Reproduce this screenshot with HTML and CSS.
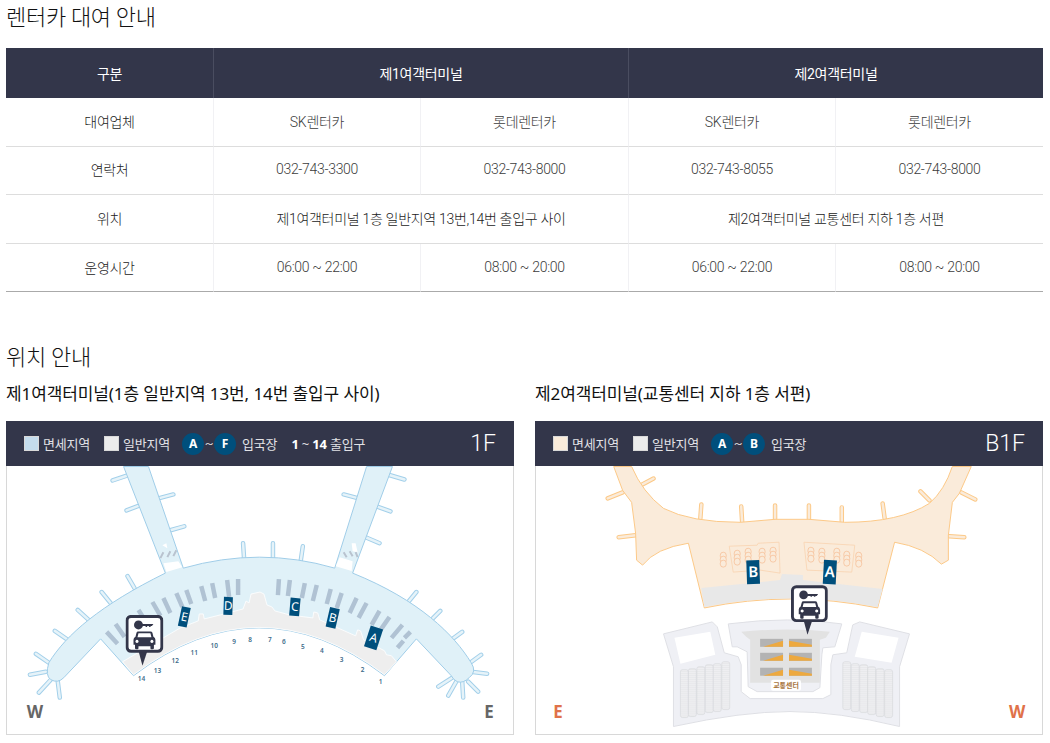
FILE: index.html
```html
<!DOCTYPE html>
<html lang="ko">
<head>
<meta charset="utf-8">
<title>렌터카 대여 안내</title>
<link rel="stylesheet" href="styles.css">
</head>
<body>
<svg class="defs" width="0" height="0" aria-hidden="true">
  <defs>
    <symbol id="pin" viewBox="0 0 38 51">
      <path class="pin-tip" d="M13 36 L17 51 L22 36 Z"/>
      <rect class="pin-box" x="1.5" y="1.5" width="35" height="35" rx="4"/>
      <g class="pin-ink">
        <circle cx="13" cy="10" r="4.5"/>
        <path d="M13 9 H28 L26.5 11 H25.5 L24.8 12 H24 L23.2 11 H22 L21.3 12 H20.5 L19.8 11 H13 Z"/>
        <path fill-rule="evenodd" d="M12.5 16.500 H25 Q26.500 16.500 27 18 L28 22 Q30 23 30 25 V30 H28.500 V33.500 Q28.500 34.500 27 34.500 H26 Q25 34.500 25 33.500 V31.500 H13 V33.500 Q13 34.500 12 34.500 H11 Q9.500 34.500 9.500 33.500 V30 H8 V25 Q8 23 10 22 L11 18 Q11.500 16.500 12.500 16.500 Z M13 18.500 L12 22.500 H26 L25 18.500 Z M11.500 25 a1.600 1.600 0 1 0 .01 0 Z M26.500 25 a1.600 1.600 0 1 0 .01 0 Z"/>
      </g>
    </symbol>
    <pattern id="stalls" width="4" height="2" patternUnits="userSpaceOnUse">
      <rect width="4" height="2" fill="#e4e5e8"/>
      <rect width="4" height="1" fill="#f2f2f4"/>
    </pattern>
    <g id="t1legs">
      <path d="M112 480L130 474M158 498L173 494M126 510L142 504M170 530L184 526M243 543L244 558M127 576L134 588M101 592L110 603M77 610L88 620M54 631L67 640M35 654L48 663M29 675L45 672M38 693L50 680M59 698L57 682M388 474L405 479M344 494L359 498M377 506L391 511M366 537L380 543M273 543L273 558M303 546L301 560M417 592L408 603M441 611L431 621M463 632L452 640M482 655L471 663M488 674L472 672M479 692L469 682M464 698L463 682M449 696L457 682M439 687L453 678"/>
    </g>
    <g id="t2legs">
      <path d="M607 498L622 492M638 486L653 478M618 537L635 535M700 518L701 504M742 522L741 506M775 519L775 505M809 519L809 505M842 522L842 507M885 518L883 503M930 500L921 491M962 492L976 499M950 536L965 537"/>
    </g>
    <g id="pod">
      <rect x="-3" y="0" width="6" height="7" rx="3"/>
      <rect x="-3" y="4" width="6" height="7" rx="3"/>
      <rect x="-3" y="8" width="6" height="7" rx="3"/>
    </g>
  </defs>
</svg>

<main class="page">
  <h2 class="title">렌터카 대여 안내</h2>
  <table class="rent">
    <colgroup><col class="c-narrow"><col class="c-narrow"><col class="c-wide"><col class="c-narrow"><col class="c-wide"></colgroup>
    <thead>
      <tr>
        <th>구분</th>
        <th colspan="2">제1여객터미널</th>
        <th colspan="2">제2여객터미널</th>
      </tr>
    </thead>
    <tbody>
      <tr><td class="head">대여업체</td><td>SK렌터카</td><td>롯데렌터카</td><td>SK렌터카</td><td>롯데렌터카</td></tr>
      <tr><td class="head">연락처</td><td>032-743-3300</td><td>032-743-8000</td><td>032-743-8055</td><td>032-743-8000</td></tr>
      <tr><td class="head">위치</td><td colspan="2" class="dark">제1여객터미널 1층 일반지역 13번,14번 출입구 사이</td><td colspan="2" class="dark">제2여객터미널 교통센터 지하 1층 서편</td></tr>
      <tr><td class="head">운영시간</td><td>06:00 ~ 22:00</td><td>08:00 ~ 20:00</td><td>06:00 ~ 22:00</td><td>08:00 ~ 20:00</td></tr>
    </tbody>
  </table>

  <h2 class="title title-location">위치 안내</h2>
  <div class="maps">
    <section class="map-col">
      <h3 class="sub">제1여객터미널(1층 일반지역 13번, 14번 출입구 사이)</h3>
      <div class="legend">
        <span class="swatch swatch-blue"></span><span class="lg-text">면세지역</span>
        <span class="swatch swatch-gray lg-next"></span><span class="lg-text">일반지역</span>
        <span class="gate gate-first">A</span><span class="tilde">~</span><span class="gate">F</span><span class="lg-text lg-after">입국장</span>
        <span class="lg-text lg-range"><b>1</b> ~ <b>14</b> 출입구</span>
        <span class="floor">1F</span>
      </div>
      <div class="map">
        <svg class="map-svg" viewBox="6 466 508 268" width="506" height="268">
          <use href="#t1legs" class="leg-o"/>
          <use href="#t1legs" class="leg-i"/>
          <path class="t1" d="M48 663 C65 635 100 605 165 573 L123 466 L148 466 L183 568 Q260 546 335 568 L367 466 L393 466 L353 573 C420 600 455 635 472 663 Q478 672 470 678 Q464 684 458 682 Q454 680 452 676 L417 639 L385 676 Q259 580 133 676 L100 639 L63 678 Q57 684 50 680 Q44 676 48 663 Z"/>
          <path class="t1-land" d="M122 662 L180 628 L198 621 L199 614 L203 614 L204 619 L224 614 L243 609 L246 601 L249 603 L251 594 L260 592 L264 594 L267 605 L272 607 L275 611 L290 615 L313 618 L314 612 L318 613 L320 620 L356 636 L358 630 L361 631 L364 640 L385 651 L387 655 L392 656 L397 662 L385 675 Q259 580 133 675 Z"/>
          <path class="bridge" d="M163 563 L178 561 L182 567 L166 572 Z M336 566 L340 557 L353 561 L352 571 Z M162 545 L166 543 L167 548 Z M352 543 L356 543 L358 552 L353 551 Z"/>
          <path class="hatch" d="M160 558L163 552M167 557L170 551M173 556L176 550M344 552L347 557M350 551L353 556M356 552L358 557"/>
          <path class="bar" d="M106 632L117 644M115 624L124 637M138 610L143 618M152 602L160 616M163 598L170 613M176 593L182 607M186 590L191 604M201 586L205 601M212 583L215 598M227 580L229 597M238 579L238 595M279 579L278 595M290 580L288 596M305 583L302 598M317 585L313 601M331 589L327 604M342 593L337 608M357 598L350 613M367 603L359 618M380 611L372 625M390 617L381 630M403 625L392 638M411 632L405 638M404 641L398 648"/>
          <g class="gates">
            <g transform="translate(184 617) rotate(12)"><rect x="-4.500" y="-10" width="9" height="20"/><text y="4">E</text></g>
            <g transform="translate(228 606) rotate(2)"><rect x="-4.500" y="-9" width="9" height="18"/><text y="4">D</text></g>
            <g transform="translate(295 607) rotate(5)"><rect x="-5" y="-9" width="10" height="18"/><text y="4">C</text></g>
            <g transform="translate(333 618) rotate(13)"><rect x="-5" y="-10" width="10" height="20"/><text y="4">B</text></g>
            <g transform="translate(374 638) rotate(18)"><rect x="-6.500" y="-11" width="13" height="22"/><text y="4">A</text></g>
          </g>
          <g class="nums">
            <text x="141" y="681">14</text><text x="157" y="673">13</text><text x="175" y="663">12</text><text x="194" y="655">11</text><text x="214" y="648">10</text><text x="234" y="644">9</text><text x="250" y="642">8</text><text x="270" y="642">7</text><text x="284" y="644">6</text><text x="303" y="649">5</text><text x="322" y="653">4</text><text x="342" y="662">3</text><text x="363" y="672">2</text><text x="381" y="684">1</text>
          </g>
          <text class="dir dir-gray" x="34" y="718">W</text>
          <text class="dir dir-gray" x="490" y="718">E</text>
          <use href="#pin" x="125" y="615" width="38" height="51"/>
        </svg>
      </div>
    </section>

    <section class="map-col">
      <h3 class="sub">제2여객터미널(교통센터 지하 1층 서편)</h3>
      <div class="legend">
        <span class="swatch swatch-cream"></span><span class="lg-text">면세지역</span>
        <span class="swatch swatch-gray lg-next"></span><span class="lg-text">일반지역</span>
        <span class="gate gate-first">A</span><span class="tilde">~</span><span class="gate">B</span><span class="lg-text lg-after">입국장</span>
        <span class="floor">B1F</span>
      </div>
      <div class="map">
        <svg class="map-svg" viewBox="535 466 508 268" width="506" height="268">
          <use href="#t2legs" class="leg-o2"/>
          <use href="#t2legs" class="leg-i2"/>
          <path class="t2" d="M613 466 L622 490 L631 502 L635 533 L636 560 L642 565 Q655 548 688 543 L704 608 Q790 590 878 608 L895 542 Q925 547 942 564 L949 560 L949 535 L953 502 L960 493 L972 466 L953 466 Q945 490 930 503 Q900 522 845 522 L809 519 L775 519 L740 522 Q690 522 663 508 Q642 492 631 466 Z"/>
          <path class="t2-land" d="M701 588 L780 580 L782 574 L803 575 L803 580 L883 589 L878 607 Q790 590 704 607 Z"/>
          <path class="shop" d="M729 546 L757 545 L758 543 L779 542 L780 573 L760 570 L733 572 Z M804 542 L855 545 L852 572 L807 570 Z"/>
          <g class="pods">
            <use href="#pod" x="723" y="552"/><use href="#pod" x="737" y="550"/><use href="#pod" x="748" y="548"/><use href="#pod" x="762" y="548"/><use href="#pod" x="773" y="547"/>
            <use href="#pod" x="811" y="547"/><use href="#pod" x="822" y="548"/><use href="#pod" x="837" y="548"/><use href="#pod" x="847" y="551"/><use href="#pod" x="859" y="552"/>
          </g>
          <g class="gates gates-large">
            <g transform="translate(753 572) rotate(-2)"><rect x="-6.500" y="-12" width="13" height="24"/><text y="5">B</text></g>
            <g transform="translate(830 572) rotate(3)"><rect x="-6.500" y="-12" width="13" height="24"/><text y="5">A</text></g>
          </g>
          <path class="tc" d="M663 634 L712 622 L717 627 L724 653 L738 657 L741 665 L741 692 L750 699 L823 699 L831 695 L831 665 L833 655 L847 653 L853 625 L860 622 L910 634 L900 667 L900 727 Q838 712 790 712 Q742 712 673 727 L673 667 Z"/>
          <path class="tc" d="M728 624 Q790 616 842 624 L835 647 L823 648 L822 655 L820 688 L813 692 L757 692 L748 687 L747 652 L737 647 L732 647 Z"/>
          <path class="tc-floor" d="M741 632 Q790 627 830 632 L826 638 L820 640 L820 683 L750 683 L750 640 L746 637 Z"/>
          <path class="tc-white" d="M674 638 L710 632 L715 655 L680 664 Z M862 632 L899 638 L892 663 L855 657 Z"/>
          <g class="stalls">
            <rect x="680" y="670" width="8" height="48" rx="2"/><rect x="688" y="669" width="8" height="48" rx="2"/><rect x="696.500" y="667" width="8" height="48" rx="2"/><rect x="705" y="665" width="8" height="48" rx="2"/><rect x="713" y="664" width="8" height="48" rx="2"/><rect x="721.500" y="662" width="8" height="48" rx="2"/>
            <rect x="843" y="662" width="8" height="48" rx="2"/><rect x="851.500" y="664" width="8" height="48" rx="2"/><rect x="860" y="665" width="8" height="48" rx="2"/><rect x="868" y="667" width="8" height="48" rx="2"/><rect x="876.500" y="669" width="8" height="48" rx="2"/><rect x="885" y="670" width="8" height="48" rx="2"/>
          </g>
          <g class="lots">
            <rect x="760" y="639" width="23" height="8"/><rect x="760" y="653" width="23" height="8"/><rect x="760" y="668" width="23" height="8"/>
            <rect x="789" y="639" width="23" height="8"/><rect x="789" y="653" width="23" height="8"/><rect x="789" y="668" width="23" height="8"/>
          </g>
          <g class="wedges">
            <path d="M763 647 L783 641 V647 Z M763 661 L783 655 V661 Z M763 676 L783 670 V676 Z M789 641 L812 645 V647 H789 Z M789 655 L812 659 V661 H789 Z M789 670 L812 674 V676 H789 Z"/>
          </g>
          <rect class="tc-tag" x="771" y="680" width="30" height="11" rx="2"/>
          <text class="tc-label" x="786" y="688">교통센터</text>
          <text class="dir dir-orange" x="557" y="718">E</text>
          <text class="dir dir-orange" x="1018" y="718">W</text>
          <use href="#pin" x="791" y="585" width="37" height="50"/>
        </svg>
      </div>
    </section>
  </div>
</main>
</body>
</html>
```

FILE: styles.css
```css
* { box-sizing: border-box; }

html, body { margin: 0; padding: 0; background: #fff; }

body {
  font-family: Roboto, "Noto Sans CJK KR", sans-serif;
  color: #333;
  overflow: hidden;
}

.defs { position: absolute; }

.page {
  width: 1037px;
  margin-left: 6px;
}

.title {
  margin: 0;
  height: 48px;
  font-size: 22px;
  font-weight: 300;
  line-height: 36px;
  letter-spacing: -0.3px;
  color: #111;
}

.title-location {
  height: 34px;
  margin-top: 48px;
}

.rent {
  width: 1037px;
  table-layout: fixed;
  border-collapse: separate;
  border-spacing: 0;
  font-size: 14px;
  letter-spacing: -0.3px;
  font-weight: 300;
  text-align: center;
}

.c-narrow { width: 207px; }
.c-wide { width: 208px; }

.rent th {
  height: 50px;
  padding: 0;
  background: #33364a;
  color: #fff;
  font-weight: 400;
  border-left: 1px solid #4a4d60;
}

.rent th:first-child { border-left: 0; }

.rent td {
  height: 48.5px;
  padding: 0 0 2px;
  color: #3c3c3c;
  border-bottom: 1px solid #ddd;
  border-left: 1px solid #f1f1f4;
}

.rent tbody tr:last-child td {
  padding-bottom: 0;
  border-bottom-color: #aaa;
}

.rent td.head {
  border-left: 0;
  color: #222;
}

.rent td.dark { color: #222; }

.maps {
  display: grid;
  grid-template-columns: 508px 508px;
  column-gap: 21px;
}

.sub {
  margin: 0;
  height: 47px;
  padding-top: 9px;
  font-family: "Noto Sans", "Noto Sans CJK KR", sans-serif;
  font-size: 17px;
  font-weight: 400;
  line-height: 22px;
  color: #111;
  letter-spacing: -0.1px;
  white-space: nowrap;
}

.legend {
  display: flex;
  align-items: center;
  height: 45px;
  padding: 0 18px;
  background: #33364a;
  color: #e2e2e6;
  font-size: 13px;
}

.swatch {
  width: 15px;
  height: 15px;
  border: 1px solid #d9d9d9;
}

.swatch-blue { background: #c4dced; }
.swatch-gray { background: #ececec; }
.swatch-cream { background: #faebda; }

.lg-text {
  margin-left: 4px;
  font-family: "Noto Sans", "Noto Sans CJK KR", sans-serif;
  letter-spacing: -0.2px;
  white-space: nowrap;
}

.lg-next { margin-left: 14px; }

.gate {
  display: flex;
  align-items: center;
  justify-content: center;
  width: 22px;
  height: 22px;
  border-radius: 50%;
  background: #004f7c;
  color: #fff;
  font-family: "Noto Sans", sans-serif;
  font-size: 12px;
  font-weight: 700;
}

.gate-first { margin-left: 12px; }

.tilde {
  width: 10px;
  text-align: center;
  color: #cfcfd4;
}

.lg-after { margin-left: 6px; }
.lg-range { margin-left: 14px; }
.lg-range b { font-weight: 700; color: #fff; }

.floor {
  margin-left: auto;
  font-size: 23px;
  font-weight: 300;
  color: #fff;
}

.map {
  height: 269px;
  border: 1px solid #d8d8d8;
  border-top: 0;
}

.map-svg { display: block; }

.leg-o { fill: none; stroke: #a3d0ea; stroke-width: 4.500; stroke-linecap: round; }
.leg-i { fill: none; stroke: #e6f3f9; stroke-width: 2.500; stroke-linecap: round; }
.leg-o2 { fill: none; stroke: #fcc987; stroke-width: 4.500; stroke-linecap: round; }
.leg-i2 { fill: none; stroke: #faebda; stroke-width: 2.500; stroke-linecap: round; }

.t1 { fill: #e0f1f8; stroke: #9fcde8; stroke-width: 1; stroke-linejoin: round; }
.t1-land { fill: #eeeeee; stroke: #fff; stroke-width: 0.800; }
.bridge { fill: #fff; }
.hatch { fill: none; stroke: #b9c3cf; stroke-width: 2; }
.bar { fill: none; stroke: #b0c2d3; stroke-width: 4.500; }

.gates rect { fill: #004f7c; }
.gates text {
  fill: #fff;
  font-family: "Noto Sans", sans-serif;
  font-size: 12px;
  text-anchor: middle;
}
.gates-large text { font-size: 15px; font-weight: 600; }

.nums text {
  fill: #3d6b8a;
  font-family: "Noto Sans", sans-serif;
  font-size: 6.500px;
  font-weight: 600;
  text-anchor: middle;
}

.dir {
  font-family: "Noto Sans", sans-serif;
  font-size: 17px;
  font-weight: 700;
  text-anchor: middle;
}
.dir-gray { fill: #666; }
.dir-orange { fill: #e0724a; }

.pin-tip { fill: #33364a; }
.pin-box { fill: #fff; stroke: #33364a; stroke-width: 3; }
.pin-ink { fill: #33364a; }

.t2 { fill: #faebda; stroke: #fcc987; stroke-width: 1; stroke-linejoin: round; }
.t2-land { fill: #e8e8e8; }
.shop { fill: none; stroke: #f9d3b0; stroke-width: 0.800; }
.pods { fill: #faebda; stroke: #f6c19a; stroke-width: 0.800; }

.tc { fill: #eff0f5; stroke: #dfe0e5; stroke-width: 1; stroke-linejoin: round; }
.tc-floor { fill: #e2e2e2; }
.tc-white { fill: #fff; }
.stalls rect { fill: url(#stalls); stroke: #d5d6da; stroke-width: 0.600; }
.lots rect { fill: #b3b3b3; }
.wedges path { fill: #eda93f; }
.tc-tag { fill: #fff; }
.tc-label {
  fill: #a8743c;
  font-family: "Noto Sans CJK KR", sans-serif;
  font-size: 7px;
  font-weight: 700;
  text-anchor: middle;
}
```
